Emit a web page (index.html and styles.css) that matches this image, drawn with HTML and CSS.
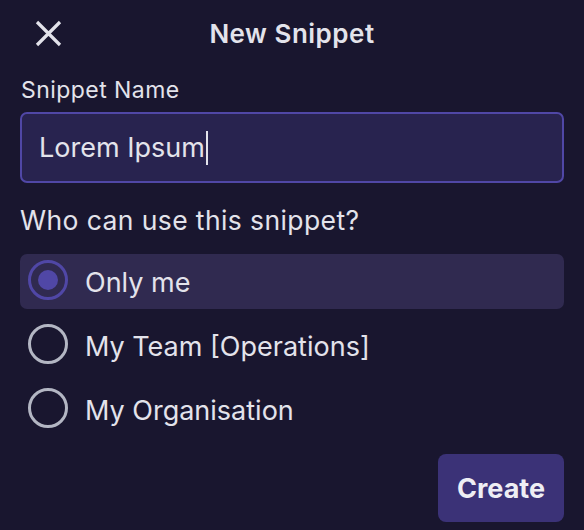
FILE: index.html
```html
<!DOCTYPE html>
<html lang="en">
<head>
<meta charset="utf-8">
<title>New Snippet</title>
<link rel="stylesheet" href="styles.css">
</head>
<body>
<div class="sheet">
  <header class="head">
    <button class="close" aria-label="Close">
      <svg width="27" height="27" viewBox="0 0 27 27" aria-hidden="true">
        <path d="M2 2 L25 25 M25 2 L2 25" stroke="#e2e2ea" stroke-width="3.2" stroke-linecap="butt" fill="none"/>
      </svg>
    </button>
    <h1 class="title">New Snippet</h1>
    <span class="spacer"></span>
  </header>

  <label class="field-label">Snippet Name</label>
  <div class="input"><span class="value">Lorem Ipsum</span><span class="caret"></span></div>

  <p class="question">Who can use this snippet?</p>

  <ul class="options">
    <li class="option selected"><span class="radio"><span class="dot"></span></span><span class="opt-text">Only me</span></li>
    <li class="option"><span class="radio"></span><span class="opt-text">My Team [Operations]</span></li>
    <li class="option"><span class="radio"></span><span class="opt-text">My Organisation</span></li>
  </ul>

  <div class="actions">
    <button class="create">Create</button>
  </div>
</div>
</body>
</html>
```

FILE: styles.css
```css
* { box-sizing: border-box; }
html, body {
  margin: 0;
  padding: 0;
  background: #19162f;
}
body {
  font-family: Inter, "Noto Sans", sans-serif;
  color: #e3e3eb;
  width: 584px;
  height: 530px;
  overflow: hidden;
}
.sheet {
  padding: 0 20px;
  display: flex;
  flex-direction: column;
}
.head {
  height: 66px;
  display: grid;
  grid-template-columns: 1fr auto 1fr;
  align-items: center;
}
.close {
  justify-self: start;
  margin-left: 15px;
  padding: 0;
  border: 0;
  background: none;
  width: 27px;
  height: 27px;
  display: flex;
}
.title {
  margin: 0;
  font-size: 26px;
  font-weight: 600;
  color: #e3e3eb;
  letter-spacing: 0.5px;
}
.field-label {
  margin-top: 10px;
  font-size: 23px;
  line-height: 28px;
  letter-spacing: 0.45px;
  padding-left: 1px;
}
.input {
  margin-top: 8px;
  height: 71px;
  border: 2px solid #5047a6;
  border-radius: 7px;
  background: #28234f;
  display: flex;
  align-items: center;
  padding-left: 17px;
  font-size: 27px;
}
.caret {
  width: 2px;
  height: 34px;
  background: #e3e3eb;
  margin-left: 1px;
}
.question {
  margin: 21px 0 0;
  font-size: 26.5px;
  line-height: 32px;
  letter-spacing: 0.4px;
}
.options {
  list-style: none;
  margin: 18px 0 0;
  padding: 0;
  display: flex;
  flex-direction: column;
  gap: 9px;
}
.option {
  height: 55px;
  border-radius: 7px;
  display: flex;
  align-items: center;
  padding-left: 8px;
  padding-bottom: 3px;
  font-size: 27px;
}
.option.selected {
  background: #302a50;
}
.radio {
  width: 40px;
  height: 40px;
  border-radius: 50%;
  border: 3px solid #b3b6c3;
  display: flex;
  align-items: center;
  justify-content: center;
  flex: none;
}
.selected .radio {
  border-color: #5047a6;
}
.dot {
  width: 20px;
  height: 20px;
  border-radius: 50%;
  background: #5047a6;
}
.opt-text {
  margin-left: 17px;
  padding-top: 4px;
}
.actions {
  margin-top: 17px;
  display: flex;
  justify-content: flex-end;
}
.create {
  width: 126px;
  height: 68px;
  border: 0;
  border-radius: 8px;
  background: #3b3277;
  color: #eeeef4;
  font-family: Inter, "Noto Sans", sans-serif;
  font-size: 27px;
  font-weight: 700;
  padding: 0;
}
```
